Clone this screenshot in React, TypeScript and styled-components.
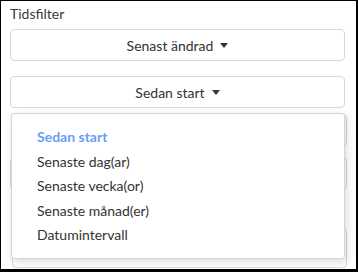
import { useState } from 'react'
import styled, { createGlobalStyle } from 'styled-components'

const GlobalStyle = createGlobalStyle`
  html, body {
    margin: 0;
    padding: 0;
    background: #ffffff;
  }
  * {
    box-sizing: border-box;
  }
`

const Frame = styled.div`
  width: 358px;
  height: 272px;
  border-style: solid;
  border-color: #000000;
  border-width: 1px 2px 3px 1px;
  background: #ffffff;
  padding: 4px 11px 0 9px;
  font-family: Lato, 'Liberation Sans', sans-serif;
  color: #333333;
  overflow: hidden;
`

const Label = styled.div`
  font-size: 14px;
  line-height: 18px;
  color: #3a3a3a;
  margin-bottom: 6px;
`

const Field = styled.div<{ $gap?: number }>`
  position: relative;
  margin-bottom: ${({ $gap }) => $gap ?? 15}px;
`

const SelectButton = styled.button`
  width: 100%;
  height: 32px;
  display: flex;
  align-items: center;
  justify-content: center;
  gap: 7px;
  border: 1px solid #d9d9d9;
  border-radius: 4px;
  background: #ffffff;
  font-family: Lato, 'Liberation Sans', sans-serif;
  font-size: 14px;
  color: #333333;
  padding: 0 12px;
  cursor: pointer;
`

const Caret = styled.span`
  width: 0;
  height: 0;
  border-left: 4px solid transparent;
  border-right: 4px solid transparent;
  border-top: 5px solid #333333;
  margin-top: 1px;
`

const Menu = styled.ul`
  position: absolute;
  top: 37px;
  left: 1px;
  right: 0;
  margin: 0;
  padding: 11px 0 10px;
  list-style: none;
  background: #ffffff;
  border: 1px solid #d4d4d4;
  border-radius: 3px;
  box-shadow: 2px 3px 8px rgba(0, 0, 0, 0.14);
  z-index: 10;
`

const MenuItem = styled.li<{ $active?: boolean }>`
  height: 24.5px;
  line-height: 24.5px;
  padding-left: 25px;
  font-size: 14px;
  font-weight: ${({ $active }) => ($active ? 700 : 400)};
  color: ${({ $active }) => ($active ? '#6b9cf7' : '#333333')};
  cursor: pointer;
`

const HiddenBox = styled.div<{ $h: number; $mb: number; $ml?: number }>`
  height: ${({ $h }) => $h}px;
  margin-bottom: ${({ $mb }) => $mb}px;
  margin-left: ${({ $ml }) => $ml ?? 0}px;
  margin-right: -2px;
  border: 1px solid #d6d6d6;
  border-radius: 4px;
`

const options = [
  'Sedan start',
  'Senaste dag(ar)',
  'Senaste vecka(or)',
  'Senaste månad(er)',
  'Datumintervall',
]

export default function App() {
  const [selected, setSelected] = useState('Sedan start')

  return (
    <>
      <GlobalStyle />
      <Frame>
        <Label>Tidsfilter</Label>
        <Field>
          <SelectButton>
            Senast ändrad <Caret />
          </SelectButton>
        </Field>
        <Field $gap={6}>
          <SelectButton>
            {selected} <Caret />
          </SelectButton>
          <Menu>
            {options.map((item) => (
              <MenuItem
                key={item}
                $active={item === selected}
                onClick={() => setSelected(item)}
              >
                {item}
              </MenuItem>
            ))}
          </Menu>
        </Field>
        <HiddenBox $h={32} $mb={11} $ml={2} />
        <HiddenBox $h={33} $mb={38} />
        <HiddenBox $h={40} $mb={0} $ml={2} />
      </Frame>
    </>
  )
}
